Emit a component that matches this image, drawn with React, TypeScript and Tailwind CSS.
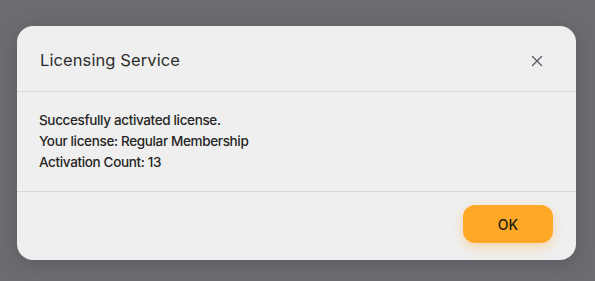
import React from "react";

export default function App() {
  return (
    <div
      className="w-[595px] h-[281px] overflow-hidden bg-[#6b6c71] pt-[26px] pl-[17px]"
      style={{ fontFamily: "Inter, 'Noto Sans', sans-serif" }}
    >
      <div className="w-[559px] h-[234px] rounded-[16px] bg-[#efefef] flex flex-col shadow-[0_4px_20px_rgba(0,0,0,0.15)]">
        <div className="h-[66px] flex items-center justify-between pl-[23px] pr-[33px] pt-[4px] border-b border-[#d9d9d9]">
          <span className="text-[16.5px] text-[#2e2e2e] tracking-[0.1px]">Licensing Service</span>
          <svg width="12" height="12" viewBox="0 0 12 12" className="text-[#5a5c66]">
            <path d="M1.5 1.5 L10.5 10.5 M10.5 1.5 L1.5 10.5" stroke="currentColor" strokeWidth="1.4" strokeLinecap="round" />
          </svg>
        </div>
        <div className="pl-[22px] pt-[18px] pb-[18px] h-[100px] border-b border-[#d9d9d9] text-[13.5px] leading-[21px] font-medium text-[#262626] tracking-[-0.35px]">
          <div>Succesfully activated license.</div>
          <div>Your license: Regular Membership</div>
          <div>Activation Count: 13</div>
        </div>
        <div className="flex-1 flex justify-end items-start pt-[13px] pr-[23px]">
          <button className="w-[90px] h-[38px] rounded-[12px] bg-[#ffa726] text-[14px] font-medium text-[#231d12] shadow-[0_4px_12px_rgba(255,167,38,0.35)]">
            OK
          </button>
        </div>
      </div>
    </div>
  );
}
